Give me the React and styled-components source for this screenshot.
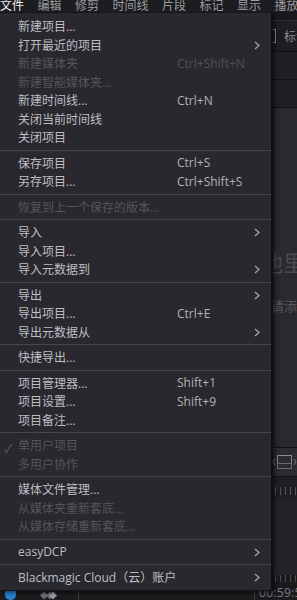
import React from 'react';
import styled, { createGlobalStyle } from 'styled-components';

const Global = createGlobalStyle`
  html, body { margin: 0; padding: 0; background: #1c1c20; }
  * { box-sizing: border-box; }
`;

const font = `"Open Sans", "Noto Sans CJK SC", "Noto Sans", sans-serif`;

const menuItems = [
  { label: '新建项目...' },
  { label: '打开最近的项目', sub: true },
  { label: '新建媒体夹', shortcut: 'Ctrl+Shift+N', disabled: true },
  { label: '新建智能媒体夹...', disabled: true },
  { label: '新建时间线...', shortcut: 'Ctrl+N' },
  { label: '关闭当前时间线' },
  { label: '关闭项目' },
  'sep',
  { label: '保存项目', shortcut: 'Ctrl+S' },
  { label: '另存项目...', shortcut: 'Ctrl+Shift+S' },
  'sep',
  { label: '恢复到上一个保存的版本...', disabled: true },
  'sep',
  { label: '导入', sub: true },
  { label: '导入项目...' },
  { label: '导入元数据到', sub: true },
  'sep',
  { label: '导出', sub: true },
  { label: '导出项目...', shortcut: 'Ctrl+E' },
  { label: '导出元数据从', sub: true },
  'sep',
  { label: '快捷导出...' },
  'sep',
  { label: '项目管理器...', shortcut: 'Shift+1' },
  { label: '项目设置...', shortcut: 'Shift+9' },
  { label: '项目备注...' },
  'sep',
  { label: '单用户项目', disabled: true, checked: true },
  { label: '多用户协作', disabled: true },
  'sep',
  { label: '媒体文件管理...' },
  { label: '从媒体夹重新套底...', disabled: true },
  { label: '从媒体存储重新套底...', disabled: true },
  'sep',
  { label: 'easyDCP', sub: true },
  'sep',
  { label: 'Blackmagic Cloud（云）账户', sub: true },
];

const topMenus = ['文件', '编辑', '修剪', '时间线', '片段', '标记', '显示', '播放'];

const Screen = styled.div`
  width: 297px;
  height: 600px;
  overflow: hidden;
  display: flex;
  flex-direction: column;
  background: #1c1c20;
  font-family: ${font};
`;

const MenuBar = styled.div`
  height: 12px;
  display: flex;
  gap: 13.5px;
  background: #1d1d21;
  white-space: nowrap;
`;

const TopItem = styled.span`
  flex: none;
  font-size: 12px;
  line-height: 12px;
  color: ${p => (p.$active ? '#f0f0f0' : '#9b9ba0')};
`;

const Body = styled.div`
  position: relative;
  flex: 1;
  display: flex;
  flex-direction: column;
  overflow: hidden;
`;

/* the app behind the menu */
const Gap = styled.div`
  height: 8px;
  background: #19191c;
`;

const Toolbar = styled.div`
  height: 32px;
  display: flex;
  align-items: center;
  gap: 8px;
  padding-left: 272px;
  background: #1e1e22;
  border-top: 1px solid #2f2f34;
  border-bottom: 1px solid #101012;
  white-space: nowrap;
  overflow: hidden;
`;

const Bracket = styled.span`
  width: 4px;
  height: 14px;
  border: 1px solid #8a8a8f;
  border-left: none;
  flex: none;
`;

const ToolLabel = styled.span`
  font-size: 12px;
  color: #8d8d92;
`;

const SubRow = styled.div`
  height: 28px;
  background: #202024;
  border-bottom: 1px solid #111114;
`;

const Viewer = styled.div`
  flex: 1;
  display: flex;
  flex-direction: column;
  padding-top: 139px;
  background: #29292e;
  border-bottom: 1px solid #111114;
  white-space: nowrap;
  overflow: hidden;
`;

const BigHint = styled.div`
  padding-left: 217px;
  font-size: 22px;
  line-height: 30px;
  color: #4a4a50;
`;

const SmallHint = styled.div`
  margin-top: 21px;
  padding-left: 271px;
  font-size: 13px;
  line-height: 16px;
  color: #55555b;
`;

const TimelineBar = styled.div`
  height: 29px;
  display: flex;
  align-items: center;
  padding-left: 272px;
  background: #2b2b30;
  border-bottom: 1px solid #141417;
`;

const Ruler = styled.div`
  height: 23px;
  background:
    repeating-linear-gradient(90deg, #55555b 0 1px, transparent 1px 5px) 0 10px / 100% 8px no-repeat,
    #1f1f23;
`;

const Tracks = styled.div`
  height: 75px;
  background: #242428;
`;

const Footer = styled.div`
  height: 25px;
  display: grid;
  grid-template-columns: 78px 176px 1fr;
  background:
    repeating-linear-gradient(90deg, #4a4a50 0 1px, transparent 1px 5px) 0 0 / 100% 7px no-repeat,
    #1b1b1e;
`;

const FooterCell = styled.div`
  display: flex;
  align-items: flex-end;
  gap: 23px;
  padding-left: ${p => p.$pad || 0}px;
  border-left: ${p => (p.$line ? '1px solid #3c3c42' : 'none')};
  overflow: hidden;
  white-space: nowrap;
`;

const Marker = styled.span`
  width: 11px;
  height: 10px;
  background: #2a7fd4;
  border-radius: 0 0 5px 5px;
`;

const Timecode = styled.span`
  font-size: 12px;
  line-height: 14px;
  color: #7b7b81;
  letter-spacing: 0.3px;
`;

/* dropdown */
const Dropdown = styled.div`
  position: absolute;
  left: 0;
  top: 1px;
  width: 273px;
  padding: 4px 0 3px;
  background: #29282e;
  border-right: 2px solid #0e0e10;
  border-bottom: 1px solid #151518;
  box-shadow: 2px 2px 4px rgba(0, 0, 0, 0.5);
`;

const Row = styled.div`
  height: 18.5px;
  display: flex;
  align-items: center;
  position: relative;
  padding-left: 18px;
  font-size: 12px;
  color: ${p => (p.$disabled ? '#55555a' : '#bfbfc3')};
  white-space: nowrap;
`;

const Label = styled.span`
  width: 159px;
`;

const Shortcut = styled.span`
  font-size: 12px;
  color: ${p => (p.$disabled ? '#505055' : '#b2b2b6')};
`;

const Check = styled.span`
  position: absolute;
  left: 4px;
  top: 3px;
  font-size: 12px;
  color: #5a5a5f;
`;

const Chevron = styled.svg`
  position: absolute;
  right: 11px;
  top: 5px;
`;

const Separator = styled.div`
  height: 1px;
  margin: 3px 0;
  background: #46464c;
`;

function MenuRow({ item }) {
  return (
    <Row $disabled={item.disabled}>
      {item.checked && <Check>✓</Check>}
      <Label>{item.label}</Label>
      {item.shortcut && <Shortcut $disabled={item.disabled}>{item.shortcut}</Shortcut>}
      {item.sub && (
        <Chevron width="6" height="9" viewBox="0 0 6 9">
          <path d="M1 1 L5 4.5 L1 8" fill="none" stroke="#a8a8ad" strokeWidth="1.2" />
        </Chevron>
      )}
    </Row>
  );
}

export default function App() {
  return (
    <>
      <Global />
      <Screen>
        <MenuBar>
          {topMenus.map((m, i) => (
            <TopItem key={m} $active={i === 0}>{m}</TopItem>
          ))}
        </MenuBar>
        <Body>
          <Gap />
          <Toolbar>
            <Bracket />
            <ToolLabel>标记</ToolLabel>
          </Toolbar>
          <SubRow />
          <SubRow />
          <Viewer>
            <BigHint>媒体池里</BigHint>
            <SmallHint>请添加片段</SmallHint>
          </Viewer>
          <TimelineBar>
            <svg width="25" height="16" viewBox="0 0 25 16">
              <path d="M3 5 L1 8 L3 11" fill="none" stroke="#7a7a80" strokeWidth="1" />
              <rect x="5.5" y="1.5" width="14" height="8" fill="none" stroke="#8a8a90" />
              <rect x="5.5" y="9.5" width="14" height="5" fill="none" stroke="#6a6a70" />
              <path d="M22 5 L24 8 L22 11" fill="none" stroke="#7a7a80" strokeWidth="1" />
            </svg>
          </TimelineBar>
          <Ruler />
          <Tracks />
          <Footer>
            <FooterCell $pad={5}>
              <Marker />
              <svg width="20" height="9" viewBox="0 0 20 9">
                <path d="M5 0.5 L9 4.5 L5 8.5 L1 4.5 Z M11 0.5 L15 4.5 L11 8.5 L7 4.5 Z" fill="#6d6d73" />
                <path d="M14 0.5 L18 4.5 L14 8.5 L10 4.5 Z" fill="#9a9aa0" />
              </svg>
            </FooterCell>
            <FooterCell $line />
            <FooterCell $line $pad={4}>
              <Timecode>00:59:56</Timecode>
            </FooterCell>
          </Footer>

          <Dropdown>
            {menuItems.map((item, i) =>
              item === 'sep' ? <Separator key={i} /> : <MenuRow key={i} item={item} />
            )}
          </Dropdown>
        </Body>
      </Screen>
    </>
  );
}
